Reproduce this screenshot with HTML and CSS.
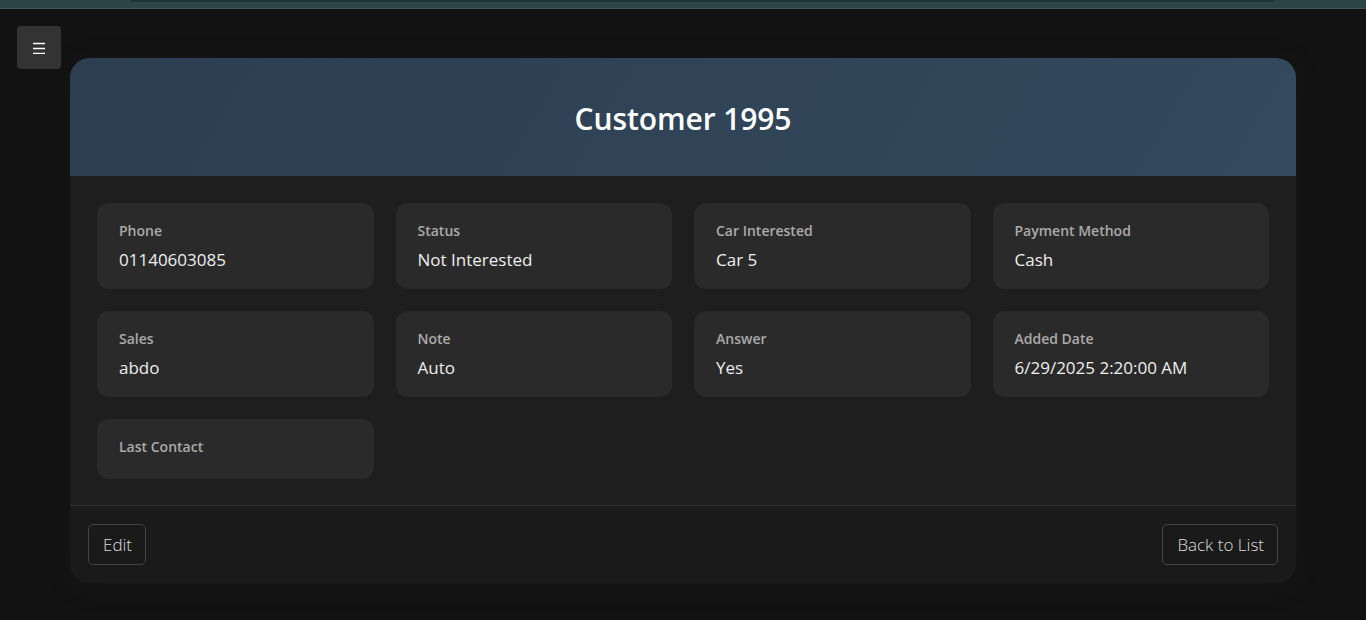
FILE: index.html
```html
<!DOCTYPE html>
<html lang="en">
<head>
<meta charset="utf-8">
<title>Customer 1995</title>
<link rel="stylesheet" href="styles.css">
</head>
<body>
<div class="topbar"><div class="topbar-inner"></div></div>
<button class="menu-btn" aria-label="Menu">
  <svg width="14" height="12" viewBox="0 0 14 12"><path d="M1 1.5H13M1 6.5H13M1 11.5H13" stroke="#fff" stroke-width="1.4"/></svg>
</button>
<main class="page">
  <section class="card">
    <header class="card-header">
      <h1 class="title">Customer 1995</h1>
    </header>
    <div class="card-body">
      <div class="grid">
        <div class="field"><div class="label">Phone</div><div class="value">01140603085</div></div>
        <div class="field"><div class="label">Status</div><div class="value">Not Interested</div></div>
        <div class="field"><div class="label">Car Interested</div><div class="value">Car 5</div></div>
        <div class="field"><div class="label">Payment Method</div><div class="value">Cash</div></div>
        <div class="field"><div class="label">Sales</div><div class="value">abdo</div></div>
        <div class="field"><div class="label">Note</div><div class="value">Auto</div></div>
        <div class="field"><div class="label">Answer</div><div class="value">Yes</div></div>
        <div class="field"><div class="label">Added Date</div><div class="value">6/29/2025 2:20:00 AM</div></div>
        <div class="field"><div class="label">Last Contact</div><div class="value"></div></div>
      </div>
    </div>
    <footer class="card-footer">
      <button class="btn">Edit</button>
      <button class="btn">Back to List</button>
    </footer>
  </section>
</main>
</body>
</html>
```
FILE: styles.css
```css
html, body {
  margin: 0;
  padding: 0;
  background: #121212;
  height: 100%;
}
body {
  font-family: "Open Sans", "Noto Sans", sans-serif;
  color: #eee;
  overflow: hidden;
}
.topbar {
  height: 8px;
  background: #2c4548;
  border-bottom: 1px solid #3b5558;
  display: flex;
}
.topbar-inner {
  margin: 0 91px 0 130px;
  flex: 1;
  height: 2px;
  background: #1c3336;
  border-radius: 0 0 8px 8px;
}
.menu-btn {
  position: absolute;
  left: 17px;
  top: 26px;
  width: 44px;
  height: 43px;
  background: #333;
  border: none;
  border-radius: 4px;
  display: flex;
  align-items: center;
  justify-content: center;
  padding: 0;
}
.page {
  padding: 49px 70px 0 70px;
}
.card {
  width: 1226px;
  background: #1e1e1e;
  border-radius: 20px;
  overflow: hidden;
  box-shadow: 0 4px 24px rgba(40,40,40,0.25);
}
.card-header {
  height: 118px;
  background: linear-gradient(120deg, #2c3e50 0%, #34495e 100%);
  display: flex;
  align-items: center;
  justify-content: center;
}
.title {
  margin: 0;
  padding-top: 2px;
  font-size: 30px;
  font-weight: 600;
  color: #fff;
  letter-spacing: -0.1px;
}
.card-body {
  padding: 27px 27px 26px 27px;
  border-bottom: 1px solid #333;
}
.grid {
  display: grid;
  grid-template-columns: repeat(4, 1fr);
  gap: 22px;
}
.field {
  background: #2a2a2a;
  border-radius: 12px;
  padding: 18px 22px 18px 22px;
  min-height: 24px;
}
.label {
  font-size: 14px;
  font-weight: 600;
  color: #aaa;
  line-height: 19px;
}
.value {
  font-size: 17px;
  color: #eee;
  line-height: 23px;
  margin-top: 8px;
}
.value:empty {
  display: none;
}
.card-footer {
  background: #1a1a1a;
  padding: 18px 18px 18px 18px;
  display: flex;
  justify-content: space-between;
}
.btn {
  font-family: "Open Sans", "Noto Sans", sans-serif;
  font-size: 17px;
  font-weight: 300;
  color: #ddd;
  background: transparent;
  border: 1px solid #444;
  border-radius: 5px;
  height: 41px;
  padding: 0 13px 0 14px;
}
```
